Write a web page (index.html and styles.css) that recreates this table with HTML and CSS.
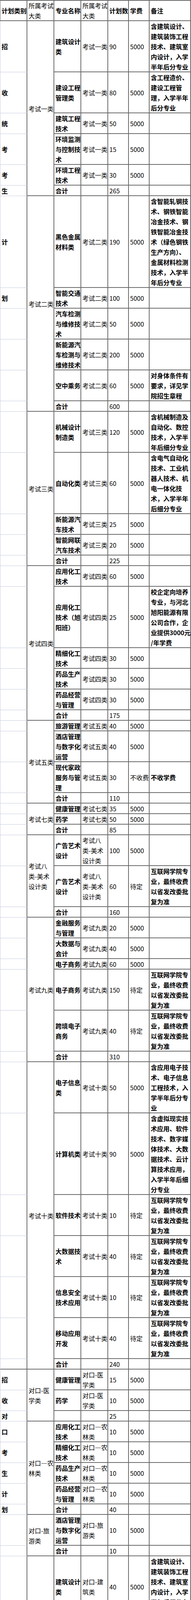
FILE: index.html
```
<!DOCTYPE html>
<html lang="zh-CN">
<head>
<meta charset="utf-8">
<meta name="viewport" content="width=device-width, initial-scale=1">
<title>招生计划</title>
<link rel="stylesheet" href="styles.css">
</head>
<body>
<table class="plan">
<colgroup>
<col class="w-cat"><col class="w-grp"><col class="w-name"><col class="w-exam"><col class="w-num"><col class="w-fee"><col class="w-note">
</colgroup>
<tbody>
<tr class="head">
<td class="cat end">计划类别</td><td>所属考试大类</td><td class="b">专业名称</td><td>所属考试大类</td><td class="b">计划数</td><td class="b">学费</td><td class="b">备注</td>
</tr>

<tr><td class="cat">招</td><td rowspan="6">考试一类</td><td class="b">建筑设计类</td><td>考试一类</td><td>90</td><td>5000</td><td class="b">含建筑设计、建筑装饰工程技术、建筑室内设计，入学半年后分专业</td></tr>
<tr><td class="cat">收</td><td class="b">建设工程管理类</td><td>考试一类</td><td>80</td><td>5000</td><td class="b">含工程造价、建设工程管理，入学半年后分专业</td></tr>
<tr><td class="cat">统</td><td class="b">建筑工程技术</td><td>考试一类</td><td>50</td><td>5000</td><td class="b"></td></tr>
<tr><td class="cat">考</td><td class="b">环境监测与控制技术</td><td>考试一类</td><td>15</td><td>5000</td><td class="b"></td></tr>
<tr><td class="cat">考</td><td class="b">环境工程技术</td><td>考试一类</td><td>30</td><td>5000</td><td class="b"></td></tr>
<tr><td class="cat">生</td><td class="b">合计</td><td></td><td>265</td><td></td><td class="b"></td></tr>

<tr><td class="cat">计</td><td rowspan="6">考试二类</td><td class="b">黑色金属材料类</td><td>考试二类</td><td>190</td><td>5000</td><td class="b">含智能轧钢技术、钢铁智能冶金技术、钢铁智能冶金技术（绿色钢铁生产方向）、金属材料检测技术，入学半年后分专业</td></tr>
<tr><td class="cat">划</td><td class="b">智能交通技术</td><td>考试二类</td><td>100</td><td>5000</td><td class="b"></td></tr>
<tr><td class="cat"></td><td class="b">汽车检测与维修技术</td><td>考试二类</td><td>50</td><td>5000</td><td class="b"></td></tr>
<tr><td class="cat"></td><td class="b">新能源汽车检测与维修技术</td><td>考试二类</td><td>200</td><td>5000</td><td class="b"></td></tr>
<tr><td class="cat"></td><td class="b">空中乘务</td><td>考试二类</td><td>60</td><td>5000</td><td class="b">对身体条件有要求，详见学院招生章程</td></tr>
<tr><td class="cat"></td><td class="b">合计</td><td></td><td>600</td><td></td><td class="b"></td></tr>

<tr><td class="cat"></td><td rowspan="5">考试三类</td><td class="b">机械设计制造类</td><td>考试三类</td><td>120</td><td>5000</td><td class="b">含机械制造及自动化、数控技术，入学半年后细分专业</td></tr>
<tr><td class="cat"></td><td class="b">自动化类</td><td>考试三类</td><td>60</td><td>5000</td><td class="b">含电气自动化技术、工业机器人技术、机电一体化技术，入学半年后细分专业</td></tr>
<tr><td class="cat"></td><td class="b">新能源汽车技术</td><td>考试三类</td><td>25</td><td>5000</td><td class="b"></td></tr>
<tr><td class="cat"></td><td class="b">智能网联汽车技术</td><td>考试三类</td><td>20</td><td>5000</td><td class="b"></td></tr>
<tr><td class="cat"></td><td class="b">合计</td><td></td><td>225</td><td></td><td class="b"></td></tr>

<tr><td class="cat"></td><td rowspan="6">考试四类</td><td class="b">应用化工技术</td><td>考试四类</td><td>60</td><td>5000</td><td class="b"></td></tr>
<tr><td class="cat"></td><td class="b">应用化工技术（旭阳班）</td><td>考试四类</td><td>25</td><td>5000</td><td class="b">校企定向培养专业，与河北旭阳能源有限公司合作，企业提供3000元<br>/年学费</td></tr>
<tr><td class="cat"></td><td class="b">精细化工技术</td><td>考试四类</td><td>30</td><td>5000</td><td class="b"></td></tr>
<tr><td class="cat"></td><td class="b">药品生产技术</td><td>考试四类</td><td>30</td><td>5000</td><td class="b"></td></tr>
<tr><td class="cat"></td><td class="b">药品经营与管理</td><td>考试四类</td><td>30</td><td>5000</td><td class="b"></td></tr>
<tr><td class="cat"></td><td class="b">合计</td><td></td><td>175</td><td></td><td class="b"></td></tr>

<tr><td class="cat"></td><td rowspan="4">考试五类</td><td class="b">旅游管理</td><td>考试五类</td><td>40</td><td>5000</td><td class="b"></td></tr>
<tr><td class="cat"></td><td class="b">酒店管理与数字化运营</td><td>考试五类</td><td>40</td><td>5000</td><td class="b"></td></tr>
<tr><td class="cat"></td><td class="b">现代家政服务与管理</td><td>考试五类</td><td>30</td><td>不收费</td><td class="b">不收学费</td></tr>
<tr><td class="cat"></td><td class="b">合计</td><td></td><td>110</td><td></td><td class="b"></td></tr>

<tr><td class="cat"></td><td rowspan="3">考试七类</td><td class="b">健康管理</td><td>考试七类</td><td>35</td><td>5000</td><td class="b"></td></tr>
<tr><td class="cat"></td><td class="b">药学</td><td>考试七类</td><td>50</td><td>5000</td><td class="b"></td></tr>
<tr><td class="cat"></td><td class="b">合计</td><td></td><td>85</td><td></td><td class="b"></td></tr>

<tr><td class="cat"></td><td rowspan="3">考试八类-美术设计类</td><td class="b">广告艺术设计</td><td>考试八类-美术设计类</td><td>100</td><td>5000</td><td class="b"></td></tr>
<tr><td class="cat"></td><td class="b">广告艺术设计</td><td>考试八类-美术设计类</td><td>60</td><td>待定</td><td class="b">互联网学院专业，最终收费以省发改委批复为准</td></tr>
<tr><td class="cat"></td><td class="b">合计</td><td></td><td>160</td><td></td><td class="b"></td></tr>

<tr><td class="cat"></td><td rowspan="6">考试九类</td><td class="b">金融服务与管理</td><td>考试九类</td><td>20</td><td>5000</td><td class="b"></td></tr>
<tr><td class="cat"></td><td class="b">大数据与会计</td><td>考试九类</td><td>40</td><td>5000</td><td class="b"></td></tr>
<tr><td class="cat"></td><td class="b">电子商务</td><td>考试九类</td><td>60</td><td>5000</td><td class="b"></td></tr>
<tr><td class="cat"></td><td class="b">电子商务</td><td>考试九类</td><td>150</td><td>待定</td><td class="b">互联网学院专业，最终收费以省发改委批复为准</td></tr>
<tr><td class="cat"></td><td class="b">跨境电子商务</td><td>考试九类</td><td>40</td><td>待定</td><td class="b">互联网学院专业，最终收费以省发改委批复为准</td></tr>
<tr><td class="cat"></td><td class="b">合计</td><td></td><td>310</td><td></td><td class="b"></td></tr>

<tr><td class="cat"></td><td rowspan="7">考试十类</td><td class="b">电子信息类</td><td>考试十类</td><td>50</td><td>5000</td><td class="b">含应用电子技术、电子信息工程技术，入学半年后分专业</td></tr>
<tr><td class="cat"></td><td class="b">计算机类</td><td>考试十类</td><td>90</td><td>5000</td><td class="b">含虚拟现实技术应用、软件技术、数字媒体技术、大数据技术、云计算技术应用，入学半年后细分专业</td></tr>
<tr><td class="cat"></td><td class="b">软件技术</td><td>考试十类</td><td>10</td><td>待定</td><td class="b">互联网学院专业，最终收费以省发改委批复为准</td></tr>
<tr><td class="cat"></td><td class="b">大数据技术</td><td>考试十类</td><td>40</td><td>待定</td><td class="b">互联网学院专业，最终收费以省发改委批复为准</td></tr>
<tr><td class="cat"></td><td class="b">信息安全技术应用</td><td>考试十类</td><td>10</td><td>待定</td><td class="b">互联网学院专业，最终收费以省发改委批复为准</td></tr>
<tr><td class="cat"></td><td class="b">移动应用开发</td><td>考试十类</td><td>40</td><td>待定</td><td class="b">互联网学院专业，最终收费以省发改委批复为准</td></tr>
<tr><td class="cat end"></td><td class="b">合计</td><td></td><td>240</td><td></td><td class="b"></td></tr>

<tr><td class="cat">招</td><td rowspan="3">对口-医学类</td><td class="b">健康管理</td><td>对口-医学类</td><td>15</td><td>5000</td><td class="b"></td></tr>
<tr><td class="cat">收</td><td class="b">药学</td><td>对口-医学类</td><td>10</td><td>5000</td><td class="b"></td></tr>
<tr><td class="cat">对</td><td class="b"></td><td></td><td>25</td><td></td><td class="b"></td></tr>

<tr><td class="cat">口</td><td rowspan="5">对口—农林类</td><td class="b">应用化工技术</td><td>对口—农林类</td><td>10</td><td>5000</td><td class="b"></td></tr>
<tr><td class="cat">考</td><td class="b">精细化工技术</td><td>对口—农林类</td><td>10</td><td>5000</td><td class="b"></td></tr>
<tr><td class="cat">生</td><td class="b">药品生产技术</td><td>对口—农林类</td><td>10</td><td>5000</td><td class="b"></td></tr>
<tr><td class="cat">计</td><td class="b">药品经营与管理</td><td>对口—农林类</td><td>10</td><td>5000</td><td class="b"></td></tr>
<tr><td class="cat">划</td><td class="b">合计</td><td></td><td>40</td><td></td><td class="b"></td></tr>

<tr><td class="cat"></td><td rowspan="2">对口-旅游类</td><td class="b">酒店管理与数字化运营</td><td>对口-旅游类</td><td>10</td><td>5000</td><td class="b"></td></tr>
<tr><td class="cat"></td><td class="b">合计</td><td></td><td>10</td><td></td><td class="b"></td></tr>

<tr><td class="cat"></td><td rowspan="4">对口-建筑类</td><td class="b">建筑设计类</td><td>对口-建筑类</td><td>40</td><td>5000</td><td class="b">含建筑设计、建筑装饰工程技术、建筑室内设计，入学半年后细分专业</td></tr>
<tr><td class="cat"></td><td class="b">建设工程管理类</td><td>对口-建筑类</td><td>30</td><td>5000</td><td class="b">含工程造价、建设工程管理，入学半年后细分专业</td></tr>
<tr><td class="cat"></td><td class="b">建筑工程技术</td><td>对口-建筑类</td><td>30</td><td>5000</td><td class="b"></td></tr>
<tr><td class="cat"></td><td class="b">合计</td><td></td><td>100</td><td></td><td class="b"></td></tr>

<tr><td class="cat"></td><td rowspan="4">对口-计算机类</td><td class="b">计算机类</td><td>对口-计算机类</td><td>60</td><td>5000</td><td class="b">含虚拟现实技术应用、软件技术、数字媒体技术、大数据技术、云计算技术应用，入学半年后分专业</td></tr>
<tr><td class="cat"></td><td class="b">大数据技术</td><td>对口-计算机类</td><td>10</td><td>待定</td><td class="b">互联网学院专业，最终收费以省发改委批复为准</td></tr>
<tr><td class="cat"></td><td class="b">移动应用开发</td><td>对口-计算机类</td><td>10</td><td>待定</td><td class="b">互联网学院专业，最终收费以省发改委批复为准</td></tr>
<tr><td class="cat"></td><td class="b">合计</td><td></td><td>80</td><td></td><td class="b"></td></tr>

<tr><td class="cat"></td><td rowspan="4">对口-机械类</td><td class="b">机械设计制造类</td><td>对口-机械类</td><td>20</td><td>5000</td><td class="b">含机械制造及自动化、数控技术，入学半年后分专业</td></tr>
<tr><td class="cat"></td><td class="b">自动化类</td><td>对口-机械类</td><td>20</td><td>5000</td><td class="b">含电气自动化技术、工业机器人技术、机电一体化技术，入学半年后细分专业</td></tr>
<tr><td class="cat"></td><td class="b">新能源汽车技术</td><td>对口-机械类</td><td>5</td><td>5000</td><td class="b"></td></tr>
<tr><td class="cat"></td><td class="b">合计</td><td></td><td>45</td><td></td><td class="b"></td></tr>

<tr><td class="cat"></td><td rowspan="2">对口-电子电工类</td><td class="b">电子信息类</td><td>对口-电子电工类</td><td>10</td><td>5000</td><td class="b">含应用电子技术、电子信息工程技术，入学半年后分专业</td></tr>
<tr><td class="cat"></td><td class="b">合计</td><td></td><td>10</td><td></td><td class="b"></td></tr>

<tr><td class="cat"></td><td rowspan="5">对口—畜牧兽医类</td><td class="b">应用化工技术</td><td>对口—畜牧兽医类</td><td>5</td><td>5000</td><td class="b"></td></tr>
<tr><td class="cat"></td><td class="b">精细化工技术</td><td>对口—畜牧兽医类</td><td>5</td><td>5000</td><td class="b"></td></tr>
<tr><td class="cat"></td><td class="b">药品生产技术</td><td>对口—畜牧兽医类</td><td>10</td><td>5000</td><td class="b"></td></tr>
<tr><td class="cat"></td><td class="b">药品经营与管理</td><td>对口—畜牧兽医类</td><td>10</td><td>5000</td><td class="b"></td></tr>
<tr><td class="cat"></td><td class="b">合计</td><td></td><td>30</td><td></td><td class="b"></td></tr>

<tr><td class="cat"></td><td rowspan="4">对口—财经类</td><td class="b">电子商务</td><td>对口—财经类</td><td>10</td><td>5000</td><td class="b"></td></tr>
<tr><td class="cat"></td><td class="b">电子商务</td><td>对口—财经类</td><td>30</td><td>待定</td><td class="b">互联网学院专业，最终收费以省发改委批复为准</td></tr>
<tr><td class="cat"></td><td class="b">大数据与会计</td><td>对口-财经类</td><td>10</td><td>5000</td><td class="b"></td></tr>
<tr><td class="cat end"></td><td class="b">合计</td><td></td><td>50</td><td></td><td class="b"></td></tr>

<tr><td class="b foot" colspan="3">注：最终招生计划及专业省</td><td></td><td></td><td></td><td></td></tr>
</tbody>
</table>
</body>
</html>
```

FILE: styles.css
```
html {
  -webkit-text-size-adjust: 100%;
  text-size-adjust: 100%;
}

html, body {
  margin: 0;
  padding: 0;
  background: #ffffff;
}

body {
  font-family: "Noto Sans CJK SC", "Noto Sans", "DejaVu Sans", sans-serif;
  font-size: 16px;
  line-height: 26px;
  color: #000000;
}

.plan {
  border-collapse: separate;
  border-spacing: 0;
  table-layout: fixed;
  width: 489px;
  border-top: 1px solid #6b6b6b;
}

/* border-box column widths (fixed layout) */
.w-cat  { width: 70px; }
.w-grp  { width: 69px; }
.w-name { width: 69px; }
.w-exam { width: 69px; }
.w-num  { width: 53px; }
.w-fee  { width: 53px; }
.w-note { width: 106px; }

.plan td {
  padding: 0 0 0 3px;
  border-right: 1px solid #6b6b6b;
  border-bottom: 1px solid #6b6b6b;
  box-shadow: inset -1px -1px 0 #6b6b6b;
  vertical-align: middle;
  text-align: left;
  font-weight: 400;
}

.plan .head td {
  box-shadow: inset -1px -1px 0 #6b6b6b, inset 0 1px 0 #6b6b6b;
}

.plan td.cat {
  font-weight: 700;
  border-left: 1px solid #c6cde0;
  border-bottom-color: #c6cde0;
  box-shadow: inset -1px 0 0 #6b6b6b;
}

.plan td.cat.end {
  border-bottom-color: #6b6b6b;
  box-shadow: inset -1px -1px 0 #6b6b6b;
}

.plan .head td.cat.end {
  border-left-color: #6b6b6b;
  box-shadow: inset -1px -1px 0 #6b6b6b, inset 0 1px 0 #6b6b6b;
}

.plan td.b {
  font-weight: 700;
}

.plan td.foot {
  border-left: 1px solid #6b6b6b;
  white-space: nowrap;
}
```
